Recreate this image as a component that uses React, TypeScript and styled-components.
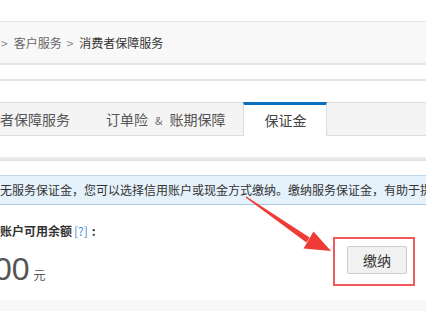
import styled, { createGlobalStyle } from "styled-components";

const GlobalStyle = createGlobalStyle`
  html, body {
    margin: 0;
    padding: 0;
    background: #fff;
  }
  body {
    font-family: "Noto Sans CJK SC", "Noto Sans", sans-serif;
    color: #333;
    overflow: hidden;
  }
`;

const Page = styled.div`
  position: relative;
  width: 426px;
  padding-top: 21px;
`;

const Breadcrumb = styled.div`
  box-sizing: border-box;
  height: 44px;
  border-top: 1px solid #e4e4e4;
  border-bottom: 2px solid #e6e6e6;
  background: #f8f8f8;
  font-size: 12px;
  line-height: 41px;
  white-space: nowrap;
`;

const Crumbs = styled.div`
  margin-left: -4px;
`;

const Crumb = styled.span<{ $current?: boolean }>`
  color: ${(p) => (p.$current ? "#333" : "#666")};
`;

const Sep = styled.span`
  color: #888;
  margin: 0 6px 0 5px;
`;

const Rule = styled.div`
  height: 2px;
  margin-top: 14px;
  background: #dfe6ee;
`;

const TabBar = styled.div`
  box-sizing: border-box;
  display: flex;
  height: 34px;
  margin-top: 21px;
  border-top: 1px solid #dddddd;
  border-bottom: 1px solid #dddddd;
  background: #f4f4f4;
  white-space: nowrap;
`;

const TabList = styled.div`
  display: flex;
  margin-left: -46px;
`;

const Tab = styled.div<{ $active?: boolean }>`
  font-size: 14px;
  color: ${(p) => (p.$active ? "#444" : "#555")};
  padding: ${(p) => (p.$active ? "0 20px" : "0 18px")};
  line-height: ${(p) => (p.$active ? "31px" : "32px")};
  ${(p) =>
    p.$active &&
    `
    margin: -1px 0;
    background: #fff;
    border-top: 3px solid #0b6fbf;
    border-left: 1px solid #dddddd;
    border-right: 1px solid #dddddd;
  `}
`;

const Amp = styled.span`
  font-size: 11px;
  margin: 0 7px;
  color: #666;
`;

const Shade = styled.div`
  height: 4px;
  margin-top: 21px;
  background: linear-gradient(#f2f2f2, #dedede);
`;

const Notice = styled.div`
  box-sizing: border-box;
  height: 30px;
  margin-top: 14px;
  border-top: 1px solid #bcd9ef;
  border-bottom: 1px solid #a8cce8;
  background: #e5f1fb;
  font-size: 12px;
  line-height: 28px;
  color: #333;
  white-space: nowrap;
  overflow: hidden;
`;

const Balance = styled.div`
  box-sizing: border-box;
  display: flex;
  justify-content: space-between;
  align-items: flex-start;
  height: 95px;
  padding-right: 11px;
`;

const BalanceInfo = styled.div`
  padding-top: 17px;
`;

const Label = styled.div`
  font-size: 12px;
  line-height: 18px;
  font-weight: 700;
  color: #333;
  white-space: nowrap;
`;

const Help = styled.span`
  font-weight: 400;
  color: #4a8bd6;
  margin: 0 4px 0 2px;
`;

const Amount = styled.div`
  display: flex;
  align-items: baseline;
  margin-top: 13px;
`;

const Number = styled.span`
  font-family: "Liberation Sans", Arial, sans-serif;
  font-size: 32px;
  line-height: 1;
  color: #555;
  margin-left: -6px;
`;

const Unit = styled.span`
  font-size: 12px;
  color: #555;
  margin-left: 4px;
`;

const Highlight = styled.div`
  margin-top: 32px;
  padding: 7px 6px 10px 12px;
  border: 2px solid #ef5a5a;
`;

const PayButton = styled.button`
  box-sizing: border-box;
  display: block;
  width: 60px;
  height: 28px;
  padding: 0;
  border: 1px solid #cccccc;
  border-radius: 2px;
  background: #f1f1f1;
  font-family: "Noto Sans CJK SC", sans-serif;
  font-size: 14px;
  color: #333;
  cursor: pointer;
`;

const Footer = styled.div`
  height: 20px;
  background: #f7f7f7;
`;

const Arrow = styled.svg`
  position: absolute;
  left: 0;
  top: 0;
  pointer-events: none;
`;

export default function App() {
  return (
    <>
      <GlobalStyle />
      <Page>
        <Breadcrumb>
          <Crumbs>
            <Sep>&gt;</Sep>
            <Crumb>客户服务</Crumb>
            <Sep>&gt;</Sep>
            <Crumb $current>消费者保障服务</Crumb>
          </Crumbs>
        </Breadcrumb>
        <Rule />
        <TabBar>
          <TabList>
            <Tab>消费者保障服务</Tab>
            <Tab>
              订单险<Amp>&amp;</Amp>账期保障
            </Tab>
            <Tab $active>保证金</Tab>
          </TabList>
        </TabBar>
        <Shade />
        <Notice>
          无服务保证金，您可以选择信用账户或现金方式缴纳。缴纳服务保证金，有助于提升店铺信誉。
        </Notice>
        <Balance>
          <BalanceInfo>
            <Label>
              账户可用余额<Help>[?]</Help>:
            </Label>
            <Amount>
              <Number>00</Number>
              <Unit>元</Unit>
            </Amount>
          </BalanceInfo>
          <Highlight>
            <PayButton>缴纳</PayButton>
          </Highlight>
        </Balance>
        <Footer />
        <Arrow width="443" height="311" viewBox="0 0 443 311">
          <polygon
            points="245.6,197.5 246.4,196.5 309.6,237.6 306.4,242.4"
            fill="#ef3b36"
          />
          <polygon points="331,251 313.5,231.5 303.5,248.5" fill="#ef3b36" />
        </Arrow>
      </Page>
    </>
  );
}
